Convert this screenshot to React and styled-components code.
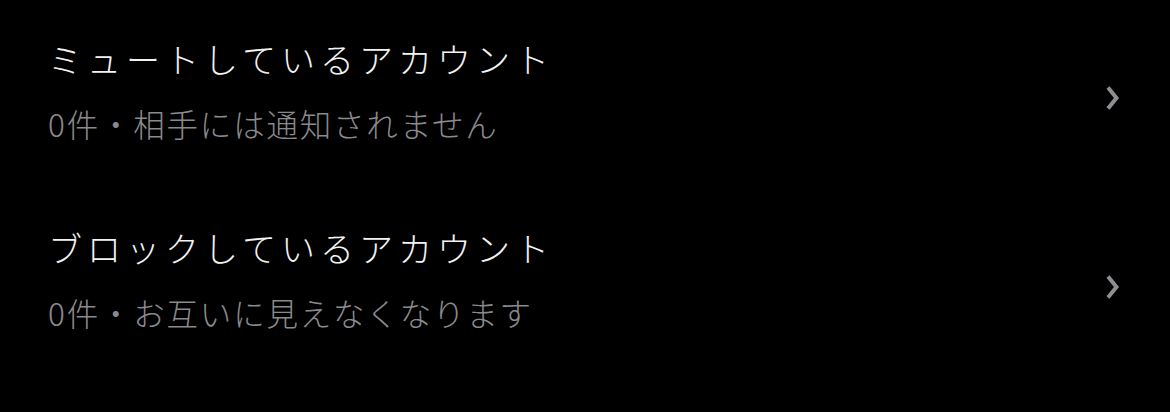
import React from "react";
import styled, { createGlobalStyle } from "styled-components";

const GlobalStyle = createGlobalStyle`
  html, body {
    margin: 0;
    padding: 0;
    background: #000000;
  }
  body {
    font-family: "Noto Sans CJK JP", "Noto Sans", sans-serif;
    -webkit-font-smoothing: antialiased;
  }
`;

const List = styled.div`
  display: flex;
  flex-direction: column;
  padding-top: 3px;
  background: #000000;
  width: 1170px;
  height: 412px;
`;

const Row = styled.div`
  display: flex;
  align-items: center;
  height: 189px;
  padding: 0 50px 0 48px;
  box-sizing: border-box;
`;

const TextBlock = styled.div`
  display: flex;
  flex-direction: column;
  flex: 1;
  gap: 22px;
  margin-top: -14px;
`;

const Title = styled.div`
  font-size: 34px;
  line-height: 42px;
  letter-spacing: 5px;
  color: #f2f2f2;
  font-weight: 300;
`;

const Subtitle = styled.div`
  font-size: 31.5px;
  line-height: 42px;
  letter-spacing: 1.8px;
  color: #8a8a8e;
  font-weight: 300;
`;

const Chevron = styled.svg`
  width: 16px;
  height: 28px;
  flex-shrink: 0;
`;

function ChevronIcon() {
  return (
    <Chevron viewBox="0 0 16 28">
      <polyline
        points="4,3.5 12.5,14 4,24.5"
        fill="none"
        stroke="#8e8e93"
        strokeWidth="4"
        strokeLinecap="butt"
        strokeLinejoin="miter"
      />
    </Chevron>
  );
}

const items = [
  { title: "ミュートしているアカウント", sub: "0件・相手には通知されません" },
  { title: "ブロックしているアカウント", sub: "0件・お互いに見えなくなります" },
];

export default function App() {
  return (
    <>
      <GlobalStyle />
      <List>
        {items.map((item) => (
          <Row key={item.title}>
            <TextBlock>
              <Title>{item.title}</Title>
              <Subtitle>{item.sub}</Subtitle>
            </TextBlock>
            <ChevronIcon />
          </Row>
        ))}
      </List>
    </>
  );
}
